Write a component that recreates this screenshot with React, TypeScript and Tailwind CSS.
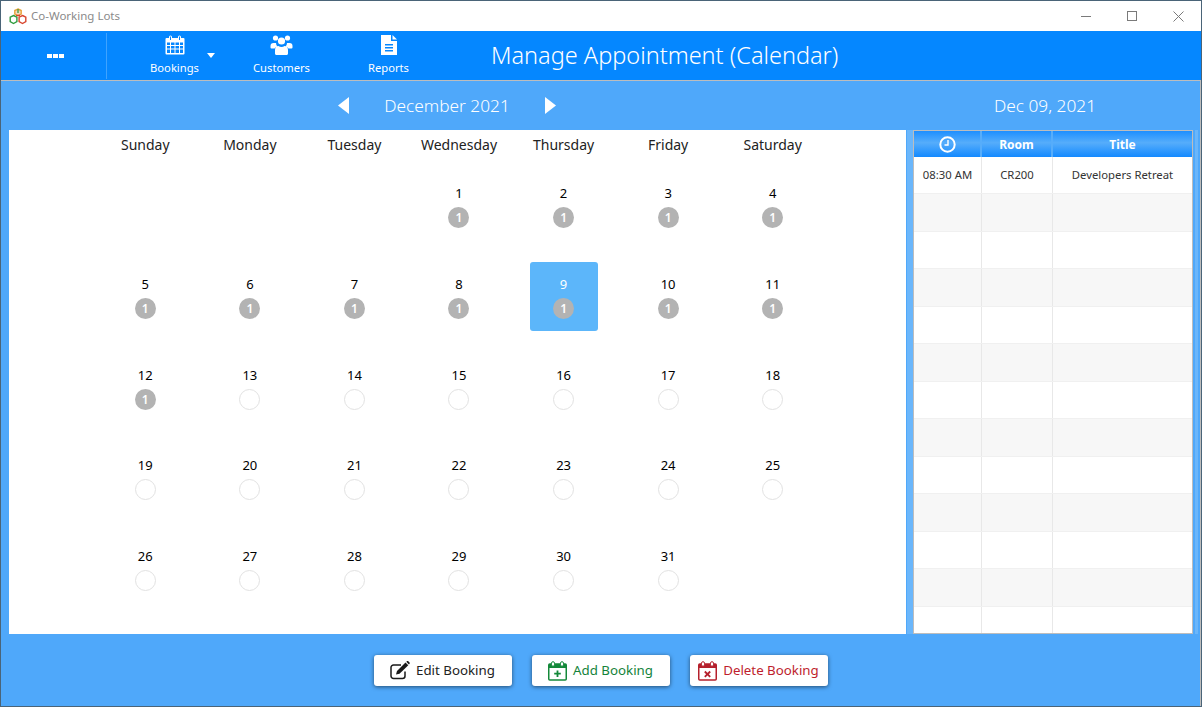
import React from "react";

const font = { fontFamily: '"Noto Sans", "Open Sans", sans-serif' };

function Logo() {
  return (
    <svg width="18" height="17" viewBox="0 0 18 17" fill="none" strokeWidth="1.4">
      <path d="M9 1l3.2 1.5v3.6L9 7.6 5.8 6.1V2.5z" fill="#f4d9c0" stroke="#e8a33a" />
      <path d="M9 1v4" stroke="#46a047" />
      <path d="M4.5 7.5l3.4 1.6v4.6L4.5 15.5 1.2 13.7V9.1z" fill="#fff" stroke="#2e9b3e" />
      <path d="M13.5 7.5l3.3 1.6v4.6l-3.3 1.8-3.4-1.8V9.1z" fill="#fff" stroke="#d8452e" />
      <path d="M7 7.5h4" stroke="#d8452e" />
    </svg>
  );
}

function CalendarIcon() {
  return (
    <svg width="20" height="20" viewBox="0 0 20 20" fill="white">
      <path fillRule="evenodd" d="M1.5 3H4V2a1.5 1.5 0 0 1 3 0v1h6V2a1.5 1.5 0 0 1 3 0v1h2.500A1 1 0 0 1 19.500 4v14.500a1 1 0 0 1-1 1h-17a1 1 0 0 1-1-1V4a1 1 0 0 1 1-1zM5 1.500V5h1V1.500zM14 1.500V5h1V1.500zM2 7.500V10h3V7.500zM6 7.500V10h3.500V7.500zM10.500 7.500V10H14V7.500zM15 7.500V10h3V7.500zM2 11v2.500h3V11zM6 11v2.500h3.500V11zM10.500 11v2.500H14V11zM15 11v2.500h3V11zM2 14.500V18h3v-3.500zM6 14.500V18h3.500v-3.500zM10.500 14.500V18H14v-3.500zM15 14.500V18h3v-3.500z" />
    </svg>
  );
}

function UsersIcon() {
  return (
    <svg width="23" height="20" viewBox="0 0 22 20" fill="white">
      <circle cx="5" cy="3" r="2.600" />
      <circle cx="17" cy="3" r="2.600" />
      <circle cx="11" cy="6" r="3.600" />
      <path d="M0 11a3 3 0 0 1 3-3h2.500a5 5 0 0 0 1.500 3.500A4.500 4.500 0 0 0 4 13.500H1a1 1 0 0 1-1-1zM22 11a3 3 0 0 0-3-3h-2.500a5 5 0 0 1-1.500 3.500 4.500 4.500 0 0 1 3 2H21a1 1 0 0 0 1-1z" />
      <path d="M8 11c1.800 1.200 4.200 1.200 6 0 2 0 3.500 1.500 3.500 4v3.500c0 .8-.6 1.500-1.500 1.500H6c-.9 0-1.500-.7-1.500-1.500V15c0-2.500 1.500-4 3.500-4z" />
    </svg>
  );
}

function ReportIcon() {
  return (
    <svg width="18" height="20" viewBox="0 0 18 20" fill="white">
      <path fillRule="evenodd" d="M1 0h10v6h6v14H1zM5 9v1.500h8V9zM5 12v1.500h8V12zM5 15v1.500h8V15z" />
      <path d="M12.500 0L17 4.500h-4.500z" />
    </svg>
  );
}

function ClockIcon() {
  return (
    <svg width="17" height="17" viewBox="0 0 17 17" fill="none" stroke="white">
      <circle cx="8.500" cy="8.500" r="7.200" strokeWidth="2" />
      <path d="M9 4v5H5.500" strokeWidth="1.400" />
    </svg>
  );
}

function EditIcon() {
  return (
    <svg width="20" height="19" viewBox="0 0 20 19" fill="none">
      <path d="M15 10.500V15a2.500 2.500 0 0 1-2.500 2.500h-9A2.500 2.500 0 0 1 1 15V6.500A2.500 2.500 0 0 1 3.500 4H11" stroke="#1a1a1a" strokeWidth="1.500" />
      <path d="M6 13.500l1-3.500 8.500-8.500 2.800 2.800L9.500 12.800z" fill="#1a1a1a" />
      <path d="M16.300.8l.6-.6a1 1 0 0 1 1.400 0l1.200 1.200a1 1 0 0 1 0 1.400l-.6.6z" fill="#1a1a1a" />
    </svg>
  );
}

function BookingCal({ color, mark }: { color: string; mark: "plus" | "x" }) {
  return (
    <svg width="19" height="20" viewBox="0 0 19 20" fill="none">
      <rect x="0.750" y="3" width="17.500" height="16" rx="1" stroke={color} strokeWidth="1.500" />
      <path d="M1 3h17v4H1z" fill={color} />
      <rect x="3.500" y="0.700" width="3" height="4.600" rx="1.500" fill="white" stroke={color} />
      <rect x="12.500" y="0.700" width="3" height="4.600" rx="1.500" fill="white" stroke={color} />
      {mark === "plus" ? (
        <path d="M9.500 9.500v6.500M6.200 12.700h6.600" stroke={color} strokeWidth="1.800" />
      ) : (
        <path d="M6.800 10.500l5.400 5.400M12.200 10.500l-5.400 5.400" stroke={color} strokeWidth="1.800" />
      )}
    </svg>
  );
}

function NavItem({ icon, label, className }: { icon: React.ReactNode; label: string; className: string }) {
  return (
    <div className={`flex flex-col items-center text-white ${className}`}>
      <div className="h-[22px] mt-[3px] flex items-center">{icon}</div>
      <div className="text-[11.200px] leading-[16px] mt-[4px]">{label}</div>
    </div>
  );
}

function DayCell({ day, count, selected }: { day: number; count?: number; selected?: boolean }) {
  return (
    <div className="h-[90.750px] flex justify-center">
      <div className={`w-[68px] h-[69px] rounded-[3px] flex flex-col items-center pt-[12px] ${selected ? "bg-[#5CB6FA]" : ""}`}>
        <div className={`text-[13px] leading-[20px] ${selected ? "text-white" : "text-black"}`}>{day}</div>
        {count ? (
          <div className="mt-[4px] w-[21px] h-[21px] rounded-full bg-[#B3B3B3] text-white text-[12px] font-semibold leading-[21px] text-center">{count}</div>
        ) : (
          <div className="mt-[4px] w-[21px] h-[21px] rounded-full border border-[#E2E2E2] bg-white" />
        )}
      </div>
    </div>
  );
}

function ActionButton({ icon, label, className }: { icon: React.ReactNode; label: string; className: string }) {
  return (
    <div className={`w-[138px] h-[31px] bg-white rounded-[3px] shadow-[0_1px_4px_rgba(0,0,0,0.55)] flex items-center justify-center gap-[6px] text-[13.300px] ${className}`}>
      {icon}
      <span>{label}</span>
    </div>
  );
}

const weekdays = ["Sunday", "Monday", "Tuesday", "Wednesday", "Thursday", "Friday", "Saturday"];
const rows = Array.from({ length: 13 }, (_, i) => i);

export default function App() {
  const days: React.ReactNode[] = [];
  for (let i = 0; i < 3; i++) days.push(<div key={`e${i}`} className="h-[90.750px]" />);
  for (let d = 1; d <= 31; d++) days.push(<DayCell key={d} day={d} count={d <= 12 ? 1 : undefined} selected={d === 9} />);

  return (
    <div style={font} className="w-[1202px] h-[707px] flex flex-col overflow-hidden border border-[#4a6478] bg-white">
      <div className="h-[30px] shrink-0 flex items-center bg-white pl-[8px]">
        <Logo />
        <span className="ml-[4px] text-[11.500px] text-[#8a8a8a]">Co-Working Lots</span>
        <div className="ml-auto flex items-center text-[#7a7a7a]">
          <div className="w-[46px] flex justify-center"><div className="w-[10px] h-px bg-[#7a7a7a]" /></div>
          <div className="w-[46px] flex justify-center"><div className="w-[10px] h-[10px] border border-[#7a7a7a]" /></div>
          <div className="w-[46px] flex justify-center">
            <svg width="11" height="11" viewBox="0 0 11 11" stroke="#7a7a7a"><path d="M.5.5l10 10M10.500.5l-10 10" /></svg>
          </div>
        </div>
      </div>

      <div className="h-[49px] shrink-0 bg-[#0587FF] flex text-white">
        <div className="w-[106px] h-[46px] mt-[2px] border-r border-[#3FA3FF] flex items-center justify-center">
          <div className="flex gap-[1px] ml-[3px]">
            <div className="w-[5px] h-[4px] bg-white" />
            <div className="w-[5px] h-[4px] bg-white" />
            <div className="w-[5px] h-[4px] bg-white" />
          </div>
        </div>
        <NavItem className="w-[107px] ml-[14px]" icon={<CalendarIcon />} label="Bookings" />
        <div className="relative w-0">
          <div className="absolute left-[-21px] top-[22px] w-0 h-0 border-l-[4px] border-r-[4px] border-t-[5px] border-l-transparent border-r-transparent border-t-white" />
        </div>
        <NavItem className="w-[107px]" icon={<UsersIcon />} label="Customers" />
        <NavItem className="w-[107px]" icon={<ReportIcon />} label="Reports" />
        <div className="ml-[49px] w-[346px] text-[23.500px] font-light leading-[49px] whitespace-nowrap">Manage Appointment (Calendar)</div>
      </div>

      <div className="flex-1 flex flex-col bg-[#4FA8FA] border-t border-[#BDBDBD] border-r border-r-[#BDBDBD] min-h-0">
        <div className="h-[49px] shrink-0 flex items-center text-white">
          <div className="w-[892px] flex items-center justify-center">
            <svg width="12" height="17" viewBox="0 0 12 17" fill="white"><path d="M11 0v17L0 8.500z" /></svg>
            <span className="mx-[34px] text-[17.300px] font-light">December 2021</span>
            <svg width="12" height="17" viewBox="0 0 12 17" fill="white"><path d="M1 0v17l11-8.500z" /></svg>
          </div>
          <div className="w-[304px] text-center text-[17.300px] font-light">Dec 09, 2021</div>
        </div>

        <div className="h-[504px] shrink-0 flex pl-[8px]">
          <div className="w-[897px] bg-white pl-[84px]">
            <div className="w-[732px] grid grid-cols-7 h-[30px]">
              {weekdays.map((w) => (
                <div key={w} className="text-center text-[14px] leading-[30px] text-[#222222]">{w}</div>
              ))}
            </div>
            <div className="w-[732px] grid grid-cols-7 mt-[11px]">{days}</div>
          </div>

          <div className="w-[6px] ml-px bg-[#6AB6FB]" />
          <div className="w-[280px] bg-white border border-[#BDBDBD] flex flex-col">
            <div className="h-[26px] shrink-0 flex bg-[linear-gradient(to_bottom,#1E8FFF_0%,#56ADFB_45%,#1389FF_100%)] text-white text-[12px] font-bold">
              <div className="w-[68px] border-r-2 border-[#56ADFB] flex items-center justify-center"><ClockIcon /></div>
              <div className="w-[71px] border-r-2 border-[#56ADFB] flex items-center justify-center pt-[2px]">Room</div>
              <div className="flex-1 flex items-center justify-center pt-[2px]">Title</div>
            </div>
            <div className="flex-1 min-h-0 overflow-hidden">
              {rows.map((i) => (
                <div key={i} className={`${i === 0 ? "h-[37px]" : "h-[37.500px]"} flex border-b border-[#F0F0F0] text-[11.300px] text-[#333333] ${i % 2 === 1 ? "bg-[#F7F7F7]" : "bg-white"}`}>
                  <div className="w-[68px] border-r border-[#E8E8E8] flex items-center justify-center pt-px">{i === 0 ? "08:30 AM" : ""}</div>
                  <div className="w-[71px] border-r border-[#E8E8E8] flex items-center justify-center pt-px">{i === 0 ? "CR200" : ""}</div>
                  <div className="flex-1 flex items-center justify-center pt-px">{i === 0 ? "Developers Retreat" : ""}</div>
                </div>
              ))}
            </div>
          </div>
          <div className="w-[3px] ml-[2px] bg-[#6AB6FB]" />
        </div>

        <div className="flex-1 flex items-start justify-center gap-[20px] pt-[21px]">
          <ActionButton className="text-[#222222]" icon={<EditIcon />} label="Edit Booking" />
          <ActionButton className="text-[#14833A]" icon={<BookingCal color="#14893A" mark="plus" />} label="Add Booking" />
          <ActionButton className="text-[#BE1E2D]" icon={<BookingCal color="#B5202C" mark="x" />} label="Delete Booking" />
        </div>
      </div>
    </div>
  );
}
